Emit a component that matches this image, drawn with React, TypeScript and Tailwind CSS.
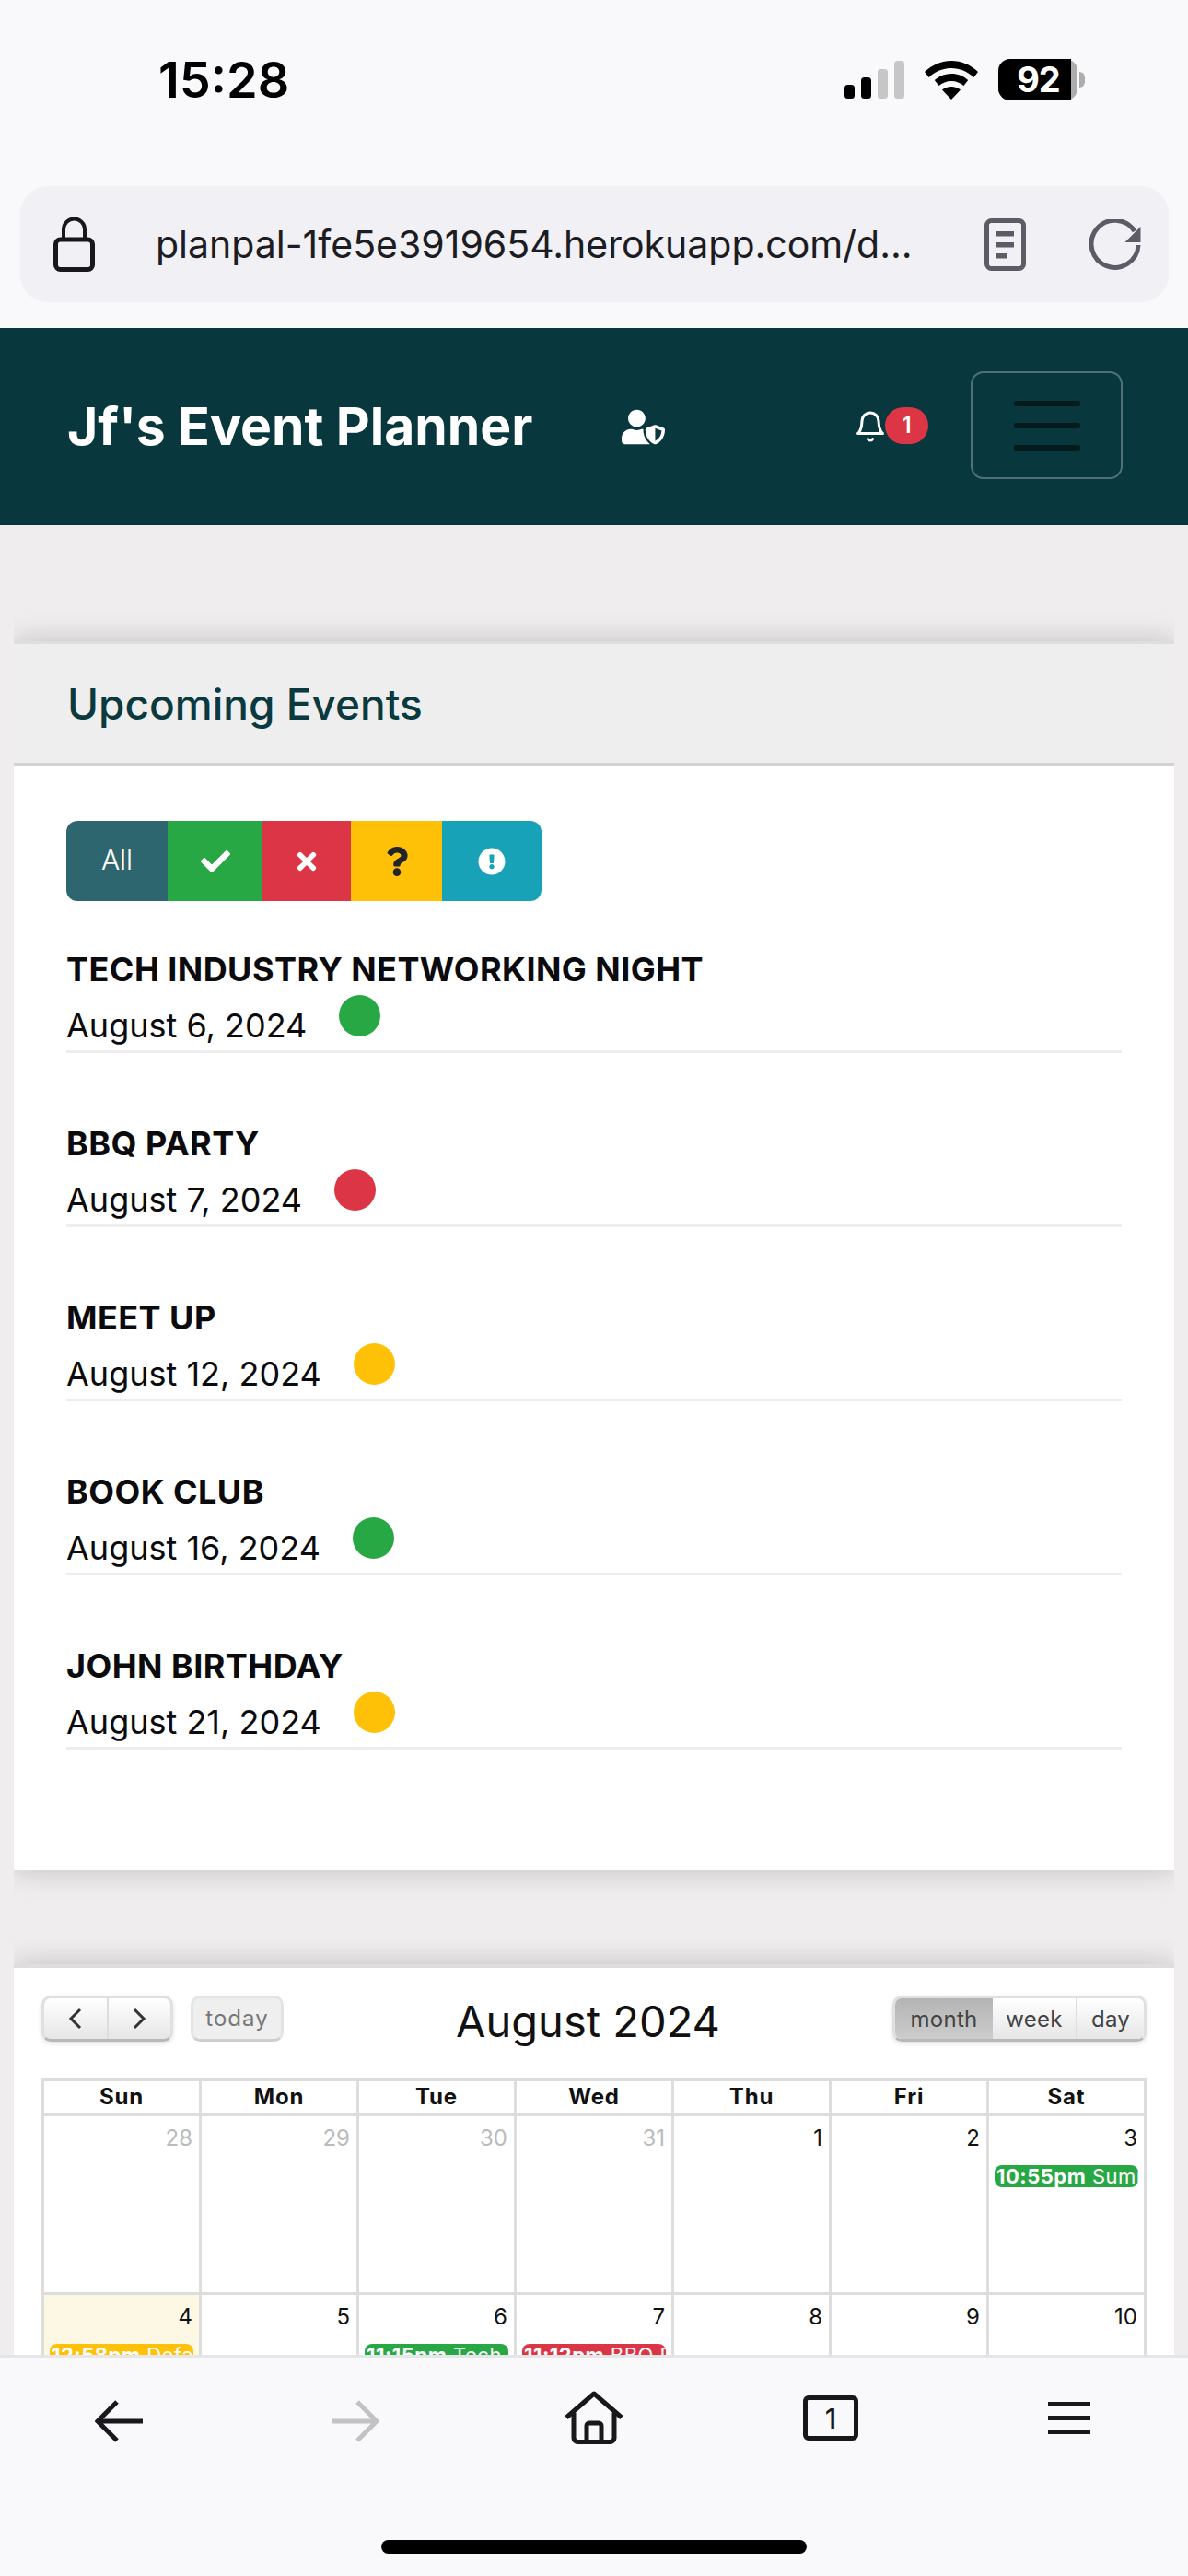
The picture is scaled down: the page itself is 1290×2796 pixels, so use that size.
import React from 'react';
import { FaCheck, FaTimes, FaQuestion, FaExclamationCircle, FaUserShield } from 'react-icons/fa';
import { FiBell } from 'react-icons/fi';

const events = [
  { name: 'TECH INDUSTRY NETWORKING NIGHT', date: 'August 6, 2024', dot: 'bg-[#28a745]' },
  { name: 'BBQ PARTY', date: 'August 7, 2024', dot: 'bg-[#dc3545]' },
  { name: 'MEET UP', date: 'August 12, 2024', dot: 'bg-[#ffc107]' },
  { name: 'BOOK CLUB', date: 'August 16, 2024', dot: 'bg-[#28a745]' },
  { name: 'JOHN BIRTHDAY', date: 'August 21, 2024', dot: 'bg-[#ffc107]' },
];

const dayNames = ['Sun', 'Mon', 'Tue', 'Wed', 'Thu', 'Fri', 'Sat'];

const weekOne = [
  { day: 28, muted: true },
  { day: 29, muted: true },
  { day: 30, muted: true },
  { day: 31, muted: true },
  { day: 1 },
  { day: 2 },
  { day: 3, time: '10:55pm', title: 'Summer', color: 'bg-[#28a745]' },
];

const weekTwo = [
  { day: 4, today: true, time: '12:58pm', title: 'Default', color: 'bg-[#ffc107]' },
  { day: 5 },
  { day: 6, time: '11:15pm', title: 'Tech', color: 'bg-[#28a745]' },
  { day: 7, time: '11:12pm', title: 'BBQ Party', color: 'bg-[#dc3545]' },
  { day: 8 },
  { day: 9 },
  { day: 10 },
];

type Cell = { day: number; muted?: boolean; today?: boolean; time?: string; title?: string; color?: string };

function CalendarWeek({ cells }: { cells: Cell[] }) {
  return (
    <div className="grid grid-cols-[repeat(6,171px)_174px] h-[194px] border-b-[3px] border-[#dddddd]">
      {cells.map((c) => (
        <div key={c.day} className={`border-l-[3px] last:border-r-[3px] border-[#dddddd] pt-[9px] ${c.today ? 'bg-[#fcf8e3]' : ''}`}>
          <div className={`text-right pr-[7px] text-[24px] leading-[30px] ${c.muted ? 'text-[#bbbbbb]' : 'text-[#111111]'}`}>{c.day}</div>
          {c.time && (
            <div className={`mx-[6px] mt-[14px] h-[24px] rounded-[8px] px-[2px] overflow-hidden whitespace-nowrap text-white text-[22px] leading-[24px] tracking-[0.5px] ${c.color}`}>
              <span className="font-bold">{c.time}</span> {c.title}
            </div>
          )}
        </div>
      ))}
    </div>
  );
}

function App() {
  return (
    <div className="w-[1290px] h-[2796px] flex flex-col overflow-hidden bg-[#efeded] font-['Inter',sans-serif]">
      {/* status bar + url bar */}
      <div className="h-[356px] shrink-0 bg-[#f9f9fb] relative">
        <div className="h-[202px] flex items-start justify-between pt-[56px] pl-[172px] pr-[112px]">
          <span className="text-[54px] leading-[62px] font-semibold text-black">15:28</span>
          <div className="flex items-center gap-[23px] pt-[8px]">
            <svg width="65" height="41" viewBox="0 0 65 41">
              <rect x="0" y="26" width="11" height="15" rx="3.5" fill="#000" />
              <rect x="18" y="18" width="11" height="23" rx="3.5" fill="#000" />
              <rect x="36" y="9" width="11" height="32" rx="3.5" fill="#c6c6c6" />
              <rect x="54" y="0" width="11" height="41" rx="3.5" fill="#c6c6c6" />
            </svg>
            <svg width="58" height="42" viewBox="0 0 58 42" className="-ml-[1px]">
              <path d="M29 0C18 0 8 4.400 0 12l4.600 6C11.500 11.500 20 8 29 8s17.500 3.500 24.400 10L58 12C50 4.400 40 0 29 0z" fill="#000" />
              <path d="M29 14c-7 0-13.300 2.600-18.200 7l4.700 6.100C19 24 23.800 22 29 22s10 2 13.500 5.100l4.700-6.100C42.300 16.600 36 14 29 14z" fill="#000" />
              <path d="M29 28c-3.800 0-7.200 1.300-10 3.500L29 42l10-10.500C36.200 29.300 32.800 28 29 28z" fill="#000" />
            </svg>
            <div className="flex items-center -ml-[1px]">
              <div className="w-[86px] h-[45px] rounded-[13px] bg-[#adadad]">
                <div className="w-[79px] h-[45px] rounded-l-[13px] bg-black text-white text-[38px] leading-[45px] font-bold text-center pl-[8px] tracking-[-1px]">92</div>
              </div>
              <div className="w-[6px] h-[17px] ml-[2px] rounded-r-full bg-[#adadad]" />
            </div>
          </div>
        </div>
        <div className="mx-[22px] w-[1247px] h-[126px] rounded-[30px] bg-[#f0f0f5] flex items-center pl-[36px] pr-[30px]">
          <svg width="45" height="60" viewBox="0 0 45 60" fill="none" className="shrink-0">
            <path d="M11 26V14a11.500 11.500 0 0 1 23 0v12" stroke="#17171c" strokeWidth="4" />
            <rect x="2.500" y="25" width="40" height="32.500" rx="5" stroke="#17171c" strokeWidth="5" />
          </svg>
          <span className="ml-[66px] text-[41px] leading-[52px] text-[#1c1c22] whitespace-nowrap flex-1">planpal-1fe5e3919654.herokuapp.com/d...</span>
          <svg width="45" height="57" viewBox="0 0 45 57" fill="none" className="shrink-0">
            <rect x="2.500" y="2.500" width="40" height="52" rx="5" stroke="#5c5c66" strokeWidth="5" />
            <rect x="12" y="14" width="20" height="5.500" fill="#5c5c66" />
            <rect x="12" y="26" width="20" height="5.500" fill="#5c5c66" />
            <rect x="12" y="38" width="12" height="5.500" fill="#5c5c66" />
          </svg>
          <svg width="57" height="55" viewBox="0 0 57 55" fill="none" className="shrink-0 ml-[68px]">
            <path d="M50 13A25.500 25.500 0 1 0 54 28" stroke="#5c5c66" strokeWidth="5" />
            <path d="M56.500 8v17h-17z" fill="#5c5c66" />
          </svg>
        </div>
      </div>

      {/* site navbar */}
      <div className="h-[214px] shrink-0 bg-[#08383e] flex items-center pl-[73px] pr-[71px]">
        <span className="w-[508px] text-[57px] leading-[70px] font-bold text-white whitespace-nowrap">Jf's Event Planner</span>
        <FaUserShield className="text-white text-[47px] ml-[94px]" />
        <div className="relative ml-[208px] w-[78px] h-[42px] flex items-center">
          <FiBell className="text-white text-[36px] -ml-[3px]" />
          <span className="absolute right-0 top-0 w-[47px] h-[40px] rounded-full bg-[#dc3545] text-white text-[24px] leading-[40px] font-semibold text-center">1</span>
        </div>
        <div className="ml-auto mb-[3px] w-[165px] h-[117px] rounded-[14px] border-[2px] border-[#4f7277] flex flex-col items-center justify-center gap-[18px]">
          <span className="w-[72px] h-[6px] rounded-[2px] bg-[#041b1e]" />
          <span className="w-[72px] h-[6px] rounded-[2px] bg-[#041b1e]" />
          <span className="w-[72px] h-[6px] rounded-[2px] bg-[#041b1e]" />
        </div>
      </div>

      {/* scrolled content, clipped by the browser toolbar */}
      <div className="flex-1 min-h-0 px-[15px] overflow-hidden">
        <div className="h-full overflow-hidden pt-[126px]">
          <div className="bg-white shadow-[0_0_30px_rgba(0,0,0,0.2)] h-[1334px] border-t-[3px] border-[#dedede]">
            <div className="h-[132px] bg-[#eeeeee] border-b-[3px] border-[#d2d2d2] pl-[58px] flex items-center">
              <h2 className="text-[46px] leading-[56px] font-medium text-[#0a3a40]">Upcoming Events</h2>
            </div>
            <div className="px-[57px] pt-[60px]">
              <div className="flex w-[516px] h-[87px] rounded-[12px] overflow-hidden text-white">
                <div className="w-[110px] bg-[#2e6670] flex items-center justify-center text-[30px] font-light pb-[3px]">All</div>
                <div className="w-[103px] bg-[#28a745] flex items-center justify-center"><FaCheck className="text-[32px]" /></div>
                <div className="w-[96px] bg-[#dc3545] flex items-center justify-center"><FaTimes className="text-[30px]" /></div>
                <div className="w-[99px] bg-[#ffc107] flex items-center justify-center"><FaQuestion className="text-[32px] text-[#212529]" /></div>
                <div className="w-[108px] bg-[#17a2b8] flex items-center justify-center"><FaExclamationCircle className="text-[30px]" /></div>
              </div>
              <div>
                {events.map((e) => (
                  <div key={e.name} className="h-[189px] first:h-[165px] flex flex-col justify-end">
                    <div className="text-[36px] leading-[44px] font-bold tracking-[0.45px] text-[#0b0b0e]">{e.name}</div>
                    <div className="flex items-start h-[69px] border-b-[3px] border-[#eeeeee]">
                      <span className="text-[36px] leading-[44px] mt-[17px] text-[#0b0b0e]">{e.date}</span>
                      <span className={`ml-[35px] mt-[6px] w-[45px] h-[45px] rounded-full ${e.dot}`} />
                    </div>
                  </div>
                ))}
              </div>
            </div>
          </div>

          <div className="mt-[102px] bg-white shadow-[0_0_30px_rgba(0,0,0,0.2)] border-t-[4px] border-[#dedede] px-[30px] pt-[30px]">
            <div className="flex items-center h-[50px]">
              <div className="flex w-[143px] h-[50px] rounded-[10px] border-[3px] border-[#e0e0e0] border-b-[#b8b8b8] bg-gradient-to-b from-white to-[#e6e6e6] shadow-[0_2px_5px_rgba(0,0,0,0.12)] text-[#333333]">
                <div className="flex-1 flex items-center justify-center border-r-[2px] border-[#dddddd]">
                  <svg width="16" height="24" viewBox="0 0 16 24" fill="none"><path d="M13 2L3 12l10 10" stroke="#333" strokeWidth="3" /></svg>
                </div>
                <div className="flex-1 flex items-center justify-center">
                  <svg width="16" height="24" viewBox="0 0 16 24" fill="none"><path d="M3 2l10 10L3 22" stroke="#333" strokeWidth="3" /></svg>
                </div>
              </div>
              <div className="ml-[19px] w-[101px] h-[50px] rounded-[10px] border-[3px] border-[#e4e4e4] border-b-[#cfcfcf] bg-[#efefef] flex items-center justify-center text-[24px] tracking-[1px] text-[#777777]">today</div>
              <div className="flex-1 text-center text-[47px] leading-[56px] text-[#111111] pt-[6px]">August 2024</div>
              <div className="flex w-[276px] h-[50px] rounded-[10px] border-[3px] border-[#e0e0e0] border-b-[#b8b8b8] overflow-hidden text-[24px] tracking-[0.3px] text-[#444444] shadow-[0_2px_5px_rgba(0,0,0,0.12)]">
                <div className="w-[106px] flex items-center justify-center bg-gradient-to-b from-[#b4b4b4] to-[#cccccc] pt-[2px]">month</div>
                <div className="w-[92px] flex items-center justify-center bg-gradient-to-b from-white to-[#e6e6e6] border-r-[2px] border-[#dddddd] pt-[2px]">week</div>
                <div className="flex-1 flex items-center justify-center bg-gradient-to-b from-white to-[#e6e6e6] pt-[2px]">day</div>
              </div>
            </div>
            <div className="mt-[40px] border-t-[3px] border-[#dddddd]">
              <div className="grid grid-cols-[repeat(6,171px)_174px] h-[38px] border-b-[4px] border-[#dddddd]">
                {dayNames.map((d) => (
                  <div key={d} className="border-l-[3px] last:border-r-[3px] border-[#dddddd] text-center text-[24px] leading-[34px] font-bold tracking-[0.8px] text-[#111111]">{d}</div>
                ))}
              </div>
              <CalendarWeek cells={weekOne} />
              <CalendarWeek cells={weekTwo} />
            </div>
          </div>
        </div>
      </div>

      {/* browser toolbar */}
      <div className="h-[240px] shrink-0 bg-[#f9f9fb] border-t-[3px] border-[#e6e6e9] flex flex-col items-center">
        <div className="w-full flex items-start pt-[36px] pl-[103px] h-[198px]">
          <svg width="52" height="46" viewBox="0 0 52 46" fill="none" className="mt-[10px]">
            <path d="M52 23H4M24 2L3 23l21 21" stroke="#17171c" strokeWidth="5" />
          </svg>
          <svg width="52" height="46" viewBox="0 0 52 46" fill="none" className="mt-[10px] ml-[205px]">
            <path d="M0 23h48M28 2l21 21-21 21" stroke="#c2c2c6" strokeWidth="5" />
          </svg>
          <svg width="64" height="58" viewBox="0 0 64 58" fill="none" className="ml-[201px]">
            <path d="M2 29L32 3l30 26" stroke="#17171c" strokeWidth="5" strokeLinejoin="round" />
            <path d="M10 24v27a4.500 4.500 0 0 0 4.500 4.500h35a4.500 4.500 0 0 0 4.500-4.500V24" stroke="#17171c" strokeWidth="5" />
            <path d="M24 55V38a3 3 0 0 1 3-3h10a3 3 0 0 1 3 3v17" stroke="#17171c" strokeWidth="5" />
          </svg>
          <div className="ml-[195px] mt-[5px] w-[60px] h-[49px] rounded-[6px] border-[5px] border-[#17171c] flex items-center justify-center text-[30px] leading-none font-medium text-[#17171c]">1</div>
          <div className="ml-[206px] mt-[12px] w-[46px] flex flex-col gap-[10px]">
            <span className="h-[5px] bg-[#17171c]" />
            <span className="h-[5px] bg-[#17171c]" />
            <span className="h-[5px] bg-[#17171c]" />
          </div>
        </div>
        <div className="w-[462px] h-[15px] rounded-full bg-black" />
      </div>
    </div>
  );
}

export default App;
